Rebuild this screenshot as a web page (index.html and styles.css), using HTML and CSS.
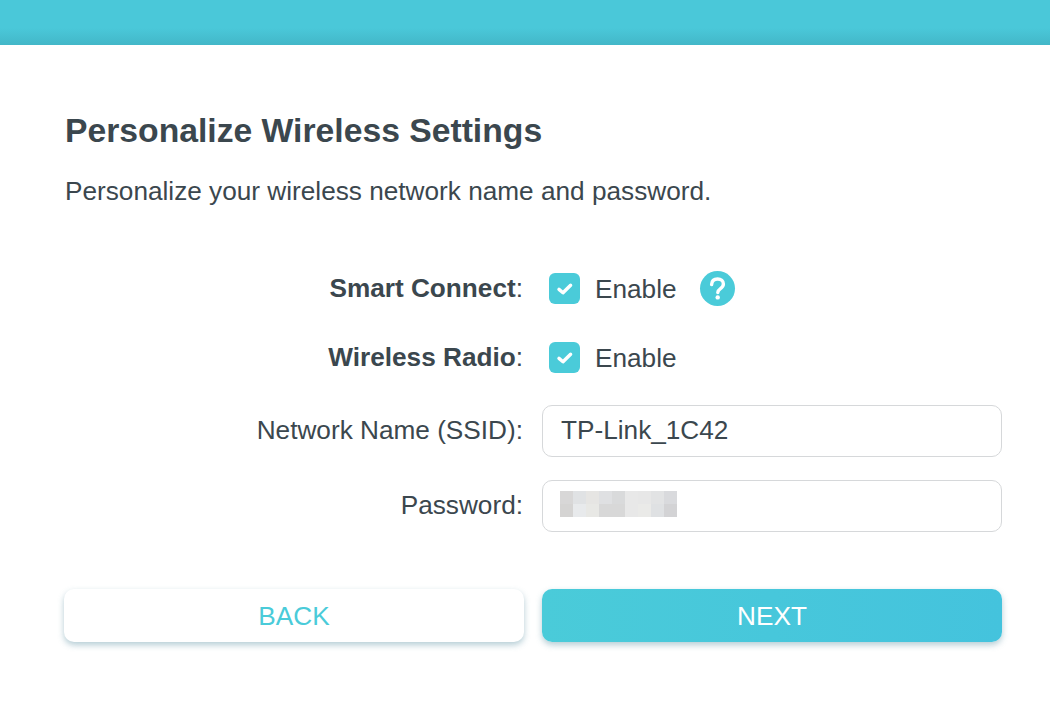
FILE: index.html
```html
<!DOCTYPE html>
<html lang="en">

<head>
    <meta charset="UTF-8">
    <meta name="viewport" content="width=device-width, initial-scale=1.0">
    <title>Personalize Wireless Settings</title>
    <link rel="stylesheet" href="styles.css">
</head>

<body>
    <div class="topBar"></div>
    <div class="content">
        <h1 class="title">Personalize Wireless Settings</h1>
        <p class="subtitle">Personalize your wireless network name and password.</p>

        <div class="form">
            <div class="row checkRow">
                <div class="label"><b>Smart Connect</b>:</div>
                <div class="field">
                    <span class="checkbox">
                        <svg width="20" height="18" viewBox="0 0 20 18">
                            <path d="M4 9.4 L8 12.8 L15.6 5.2" fill="none" stroke="#fff" stroke-width="3.4" stroke-linecap="round" stroke-linejoin="round" />
                        </svg>
                    </span>
                    <span class="checkText">Enable</span>
                    <span class="help">
                        <svg width="35" height="35" viewBox="0 0 35 35">
                            <path d="M11.6 13.6 C11.8 10 14.2 8 17.6 8 C21 8 23.4 10 23.4 13 C23.4 15.4 22 16.6 20.2 17.8 C18.6 18.9 17.8 19.8 17.8 21.6" fill="none" stroke="#fff" stroke-width="3.4" stroke-linecap="round" />
                            <circle cx="17.7" cy="26.4" r="2.2" fill="#fff" />
                        </svg>
                    </span>
                </div>
            </div>
            <div class="row checkRow">
                <div class="label"><b>Wireless Radio</b>:</div>
                <div class="field">
                    <span class="checkbox">
                        <svg width="20" height="18" viewBox="0 0 20 18">
                            <path d="M4 9.4 L8 12.8 L15.6 5.2" fill="none" stroke="#fff" stroke-width="3.4" stroke-linecap="round" stroke-linejoin="round" />
                        </svg>
                    </span>
                    <span class="checkText">Enable</span>
                </div>
            </div>
            <div class="row inputRow">
                <div class="label">Network Name (SSID):</div>
                <input class="textInput" type="text" value="TP-Link_1C42">
            </div>
            <div class="row inputRow">
                <div class="label">Password:</div>
                <div class="textInput">
                    <div class="blurred">
                        <i style="background:#d8d7d7"></i><i style="background:#e0e2e4"></i><i style="background:#e6e5e3"></i><i style="background:#dfe0e2"></i><i style="background:#d9dadb"></i><i style="background:#e8e8e8"></i><i style="background:#e7e7e7"></i><i style="background:#e2e3e4"></i><i style="background:#d9dadd"></i>
                        <i style="background:#d5d4d3"></i><i style="background:#e8eaec"></i><i style="background:#e8e8e5"></i><i style="background:#d8d8d8"></i><i style="background:#d8d8d8"></i><i style="background:#e8e8e8"></i><i style="background:#eaeaE8"></i><i style="background:#dfe1e3"></i><i style="background:#d3d3d5"></i>
                    </div>
                </div>
            </div>
        </div>

        <div class="buttons">
            <button class="btn back">BACK</button>
            <button class="btn next">NEXT</button>
        </div>
    </div>
</body>

</html>
```

FILE: styles.css
```css
* {
    box-sizing: border-box;
}

body {
    margin: 0;
    background-color: #fff;
    font-family: "Liberation Sans", Arial, sans-serif;
    color: #3b474e;
    font-size: 26.2px;
}

.topBar {
    height: 45px;
    background: linear-gradient(to bottom, #4ac8d9 0, #4ac8d9 28px, #43b7c8 45px);
}

.content {
    padding: 63px 48px 61px 64px;
}

.title {
    margin: 0 0 0 1px;
    font-size: 33.7px;
    line-height: 44px;
    font-weight: bold;
}

.subtitle {
    margin: 24px 0 0 1px;
    font-size: 26.2px;
    line-height: 30px;
}

.form {
    margin-top: 48px;
}

.row {
    display: flex;
    align-items: center;
}

.label {
    width: 459px;
    text-align: right;
    margin-right: 19px;
    white-space: nowrap;
}

.checkRow {
    height: 69px;
}

.inputRow {
    height: 52px;
    margin-bottom: 23px;
}

.inputRow .label {
    padding-bottom: 2px;
}

.checkRow + .inputRow {
    margin-top: 13px;
}

.field {
    display: flex;
    align-items: center;
    padding-left: 7px;
}

.checkbox {
    display: flex;
    align-items: center;
    justify-content: center;
    width: 31px;
    height: 31px;
    border-radius: 6px;
    background-color: #4acbd9;
}

.checkText {
    margin-left: 15px;
    padding-top: 2px;
}

.help {
    display: flex;
    width: 35px;
    height: 35px;
    margin-left: 23px;
    border-radius: 50%;
    background-color: #4acbd9;
}

.textInput {
    display: block;
    width: 460px;
    height: 52px;
    padding: 0 18px 2px;
    border: 1px solid #d6d8da;
    border-radius: 10px;
    background: #fff;
    font: 26.2px "Liberation Sans", Arial, sans-serif;
    color: #3b474e;
    outline: none;
}

.blurred {
    display: grid;
    grid-template-columns: repeat(9, 13px);
    grid-auto-rows: 13px;
    margin: 10px 0 0 -1px;
}

.buttons {
    display: flex;
    gap: 18px;
    margin-top: 57px;
}

.btn {
    width: 460px;
    height: 53px;
    padding-top: 2px;
    border: none;
    border-radius: 10px;
    font: 26.2px "Liberation Sans", Arial, sans-serif;
    box-shadow: 0 3px 6px rgba(70, 130, 150, 0.4);
}

.back {
    background-color: #fff;
    color: #4acbd9;
}

.next {
    background: linear-gradient(to right, #4acbd9, #44c3dd);
    color: #fff;
}
```
